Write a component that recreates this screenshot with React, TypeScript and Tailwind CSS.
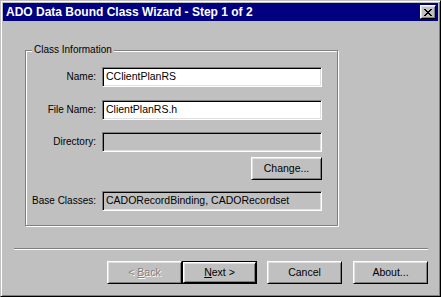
import React from "react";

const raised =
  "border border-t-white border-l-white border-r-black border-b-black shadow-[inset_1px_1px_0_#dfdfdf,inset_-1px_-1px_0_#808080]";
const sunken =
  "border border-t-[#808080] border-l-[#808080] border-r-white border-b-white shadow-[inset_1px_1px_0_#000,inset_-1px_-1px_0_#dfdfdf]";

function Field({ label, value, enabled = true }: { label: string; value?: string; enabled?: boolean }) {
  return (
    <div className="flex items-center gap-[6px]">
      <span className="w-[70px] text-right text-[10px] leading-none text-black">{label}</span>
      <div
        className={`${sunken} w-[220px] h-[20px] flex items-center pl-[3px] text-[10.5px] text-black ${
          enabled ? "bg-white" : "bg-[#c0c0c0]"
        }`}
      >
        {value}
      </div>
    </div>
  );
}

function Button({ children, wide = 75, isDefault = false }: { children: React.ReactNode; wide?: number; isDefault?: boolean }) {
  const size = wide === 75 ? "w-[75px]" : "w-[71px]";
  if (isDefault) {
    return (
      <div className={`${size} h-[23px] border border-black flex`}>
        <div className={`${raised} flex-1 flex items-center justify-center text-[10.5px] text-black`}>{children}</div>
      </div>
    );
  }
  return (
    <div className={`${raised} ${size} h-[23px] flex items-center justify-center text-[10.5px] text-black`}>
      {children}
    </div>
  );
}

export default function App() {
  return (
    <div
      className="w-[441px] h-[297px] bg-[#c0c0c0] border border-t-[#c0c0c0] border-l-[#c0c0c0] border-r-black border-b-black shadow-[inset_1px_1px_0_#fff,inset_-1px_-1px_0_#808080] p-[2px] flex flex-col"
      style={{ fontFamily: '"Liberation Sans", Arial, sans-serif' }}
    >
      {/* Title bar */}
      <div className="h-[18px] bg-[#000080] flex items-center justify-between pl-[3px] pr-[2px]">
        <span className="text-white font-bold text-[12px] leading-none">ADO Data Bound Class Wizard - Step 1 of 2</span>
        <div className={`${raised} w-[16px] h-[14px] bg-[#c0c0c0] flex items-center justify-center`}>
          <svg width="8" height="7" viewBox="0 0 8 7" shapeRendering="crispEdges">
            <path
              d="M0 0h2v1h-2zM6 0h2v1h-2zM1 1h2v1h-2zM5 1h2v1h-2zM2 2h4v1h-4zM3 3h2v1h-2zM2 4h4v1h-4zM1 5h2v1h-2zM5 5h2v1h-2zM0 6h2v1h-2zM6 6h2v1h-2z"
              fill="#000"
            />
          </svg>
        </div>
      </div>

      {/* Class Information group */}
      <div className="relative ml-[22px] mt-[29px] w-[313px] h-[176px] border border-[#808080] shadow-[inset_1px_1px_0_#fff,1px_1px_0_#fff]">
        <span className="absolute left-[6px] top-[-7px] px-[2px] bg-[#c0c0c0] text-[10px] leading-[12px] text-black">
          Class Information
        </span>
        <div className="w-[296px] flex flex-col pt-[16px]">
          <Field label="Name:" value="CClientPlanRS" />
          <div className="mt-[13px]">
            <Field label="File Name:" value="ClientPlanRS.h" />
          </div>
          <div className="mt-[12px]">
            <Field label="Directory:" enabled={false} />
          </div>
          <div className="mt-[5px] self-end">
            <Button wide={71}>Change...</Button>
          </div>
          <div className="mt-[11px]">
            <Field label="Base Classes:" value="CADORecordBinding, CADORecordset" enabled={false} />
          </div>
        </div>
      </div>

      {/* Separator */}
      <div className="ml-[11px] mt-[22px] w-[414px] h-[2px] border-t border-t-[#808080] border-b border-b-white" />

      {/* Buttons */}
      <div className="ml-[104px] mt-[11px] flex">
        <Button>
          <span className="text-[#808080] [text-shadow:1px_1px_0_#fff]">
            &lt; <u>B</u>ack
          </span>
        </Button>
        <Button isDefault>
          <span>
            <u>N</u>ext &gt;
          </span>
        </Button>
        <div className="ml-[10px]">
          <Button>Cancel</Button>
        </div>
        <div className="ml-[11px]">
          <Button>About...</Button>
        </div>
      </div>
    </div>
  );
}
